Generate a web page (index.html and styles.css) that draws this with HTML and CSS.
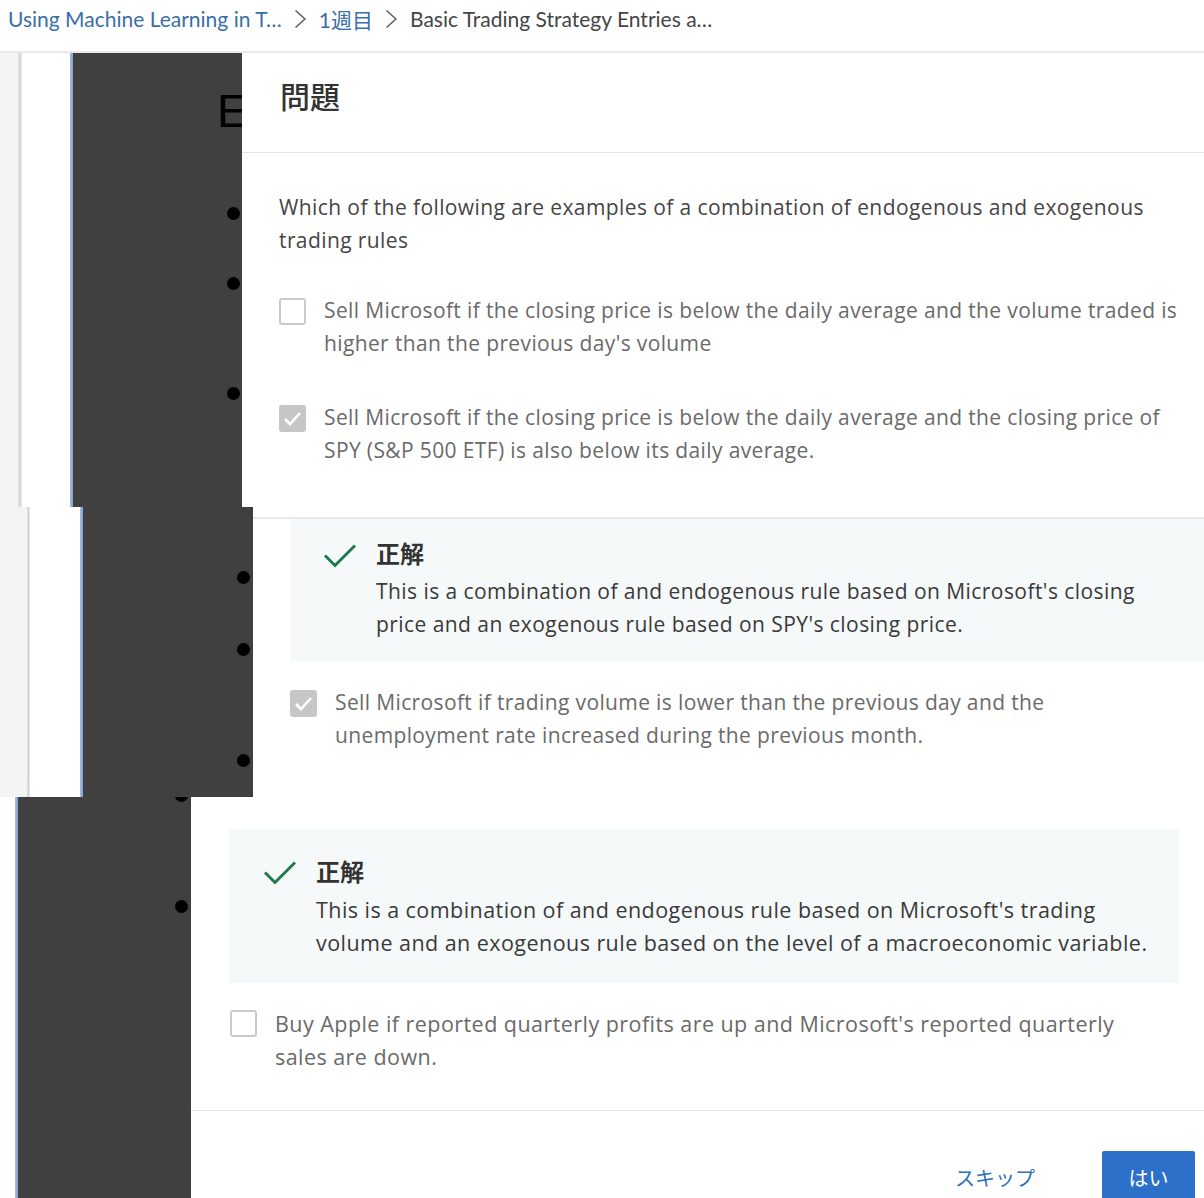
FILE: index.html
```html
<!DOCTYPE html>
<html lang="ja">
<head>
<meta charset="utf-8">
<title>問題</title>
<link rel="stylesheet" href="styles.css">
</head>
<body>
<nav class="crumbs">
  <a class="crumb link">Using Machine Learning in T…</a>
  <svg class="chev" width="13" height="20" viewBox="0 0 13 20"><polyline points="1.5,1.5 11,10 1.5,18.5" fill="none" stroke="#555" stroke-width="1.4"/></svg>
  <a class="crumb link">1週目</a>
  <svg class="chev" width="13" height="20" viewBox="0 0 13 20"><polyline points="1.5,1.5 11,10 1.5,18.5" fill="none" stroke="#555" stroke-width="1.4"/></svg>
  <span class="crumb current">Basic Trading Strategy Entries a…</span>
</nav>

<section class="band band1">
  <div class="g-gray g-gray1"></div>
  <div class="g-rule g-rule1"></div>
  <div class="g-white g-white1"></div>
  <div class="g-blue"></div>
  <div class="dark dark1">
    <span class="big-e">E</span>
    <i class="dot"></i><i class="dot"></i><i class="dot"></i>
  </div>
  <div class="modal">
    <header class="m-head">問題</header>
    <div class="m-body m-body1">
      <p class="question">Which of the following are examples of a combination of endogenous and exogenous<br>trading rules</p>
      <div class="opt opt-first">
        <span class="cb"></span>
        <span class="opt-text">Sell Microsoft if the closing price is below the daily average and the volume traded is<br>higher than the previous day's volume</span>
      </div>
      <div class="opt opt-second">
        <span class="cb cb-on"><svg width="27" height="27" viewBox="0 0 27 27"><polyline points="6,14 11,19 21,8" fill="none" stroke="#fff" stroke-width="2.6"/></svg></span>
        <span class="opt-text">Sell Microsoft if the closing price is below the daily average and the closing price of<br>SPY (S&amp;P 500 ETF) is also below its daily average.</span>
      </div>
    </div>
  </div>
</section>

<section class="band band2">
  <div class="g-gray g-gray2"></div>
  <div class="g-rule g-rule2"></div>
  <div class="g-white g-white2"></div>
  <div class="g-blue"></div>
  <div class="dark dark2">
    <i class="dot"></i><i class="dot"></i><i class="dot"></i>
  </div>
  <div class="modal">
    <div class="m-body m-body2">
      <div class="fb fb2">
        <svg class="fb-icon" width="34" height="25" viewBox="0 0 34 25"><polyline points="2,12.5 12,22.5 32,2.5" fill="none" stroke="#1f7a4d" stroke-width="3"/></svg>
        <div class="fb-main">
          <div class="fb-title">正解</div>
          <p class="fb-text">This is a combination of and endogenous rule based on Microsoft's closing<br>price and an exogenous rule based on SPY's closing price.</p>
        </div>
      </div>
      <div class="opt opt-after">
        <span class="cb cb-on"><svg width="27" height="27" viewBox="0 0 27 27"><polyline points="6,14 11,19 21,8" fill="none" stroke="#fff" stroke-width="2.6"/></svg></span>
        <span class="opt-text">Sell Microsoft if trading volume is lower than the previous day and the<br>unemployment rate increased during the previous month.</span>
      </div>
    </div>
  </div>
</section>

<section class="band band3">
  <div class="g-white g-white3"></div>
  <div class="g-blue"></div>
  <div class="dark dark3">
    <i class="dot"></i><i class="dot"></i>
  </div>
  <div class="modal">
    <div class="m-body m-body3">
      <div class="fb fb3">
        <svg class="fb-icon" width="34" height="25" viewBox="0 0 34 25"><polyline points="2,12.5 12,22.5 32,2.5" fill="none" stroke="#1f7a4d" stroke-width="3"/></svg>
        <div class="fb-main">
          <div class="fb-title">正解</div>
          <p class="fb-text">This is a combination of and endogenous rule based on Microsoft's trading<br>volume and an exogenous rule based on the level of a macroeconomic variable.</p>
        </div>
      </div>
      <div class="opt opt-after3">
        <span class="cb"></span>
        <span class="opt-text">Buy Apple if reported quarterly profits are up and Microsoft's reported quarterly<br>sales are down.</span>
      </div>
    </div>
    <footer class="m-foot">
      <button class="btn btn-skip">スキップ</button>
      <button class="btn btn-yes">はい</button>
    </footer>
  </div>
</section>
</body>
</html>
```

FILE: styles.css
```css
* { box-sizing: border-box; }

html, body {
  margin: 0;
  padding: 0;
  background: #fff;
}

body {
  width: 1204px;
  height: 1198px;
  overflow: hidden;
  font-family: "Open Sans", "Noto Sans CJK JP", sans-serif;
}

p { margin: 0; }

/* breadcrumb */
.crumbs {
  height: 53px;
  padding: 0 0 14px 8px;
  border-bottom: 2px solid #e9e9e9;
  display: flex;
  align-items: center;
  gap: 12px;
  font-family: "Lato", "Noto Sans CJK JP", sans-serif;
  font-size: 21px;
  white-space: nowrap;
}
.crumb { text-decoration: none; }
.link { color: #3a6ea8; }
.current { color: #454545; }
.chev { flex: none; }

/* bands */
.band {
  display: flex;
  overflow: hidden;
}
.band1 { height: 454px; }
.band2 { height: 290px; }
.band3 { height: 401px; }

.g-gray, .g-rule, .g-white, .g-blue { flex: none; }
.g-gray { background: #f4f4f4; }
.g-gray1 { width: 18px; }
.g-gray2 { width: 27px; }
.g-rule { background: linear-gradient(to right, #e4e4e4, #d3d3d3, #ececec); }
.g-rule1 { width: 4px; }
.g-rule2 { width: 3px; }
.g-white { background: #fff; }
.g-white1 { width: 48px; }
.g-white2 { width: 50px; }
.g-white3 { width: 15px; }
.g-blue {
  width: 3px;
  background: linear-gradient(to right, #a8bde0, #7f9fd1);
}

.dark {
  flex: none;
  background: #404040;
  overflow: hidden;
  display: flex;
  flex-direction: column;
  align-items: flex-start;
}
.dark1 { width: 169px; padding-left: 144px; }
.dark2 { width: 170px; padding-left: 154px; }
.dark3 { width: 173px; padding-left: 157px; }

.big-e {
  display: block;
  margin-top: 35px;
  font-family: "Liberation Sans", sans-serif;
  font-size: 46px;
  line-height: 46px;
  color: #000;
}
.dot {
  display: block;
  flex: none;
  width: 13px;
  height: 13px;
  border-radius: 50%;
  background: #000;
}
.dark1 .dot { margin-left: 10px; }
.dark1 .dot:nth-of-type(1) { margin-top: 72.5px; }
.dark1 .dot:nth-of-type(2) { margin-top: 57px; }
.dark1 .dot:nth-of-type(3) { margin-top: 97px; }
.dark2 .dot:nth-of-type(1) { margin-top: 63.5px; }
.dark2 .dot:nth-of-type(2) { margin-top: 59px; }
.dark2 .dot:nth-of-type(3) { margin-top: 98px; }
.dark3 .dot:nth-of-type(1) { margin-top: -8.5px; }
.dark3 .dot:nth-of-type(2) { margin-top: 98px; }

/* modal */
.modal {
  flex: 1;
  min-width: 0;
  overflow: hidden;
  background: #fff;
}
.m-head {
  height: 100px;
  padding: 0 0 16px 38px;
  border-bottom: 1px solid #e4e4e4;
  display: flex;
  align-items: center;
  font-family: "Noto Sans CJK JP", sans-serif;
  font-weight: 500;
  font-size: 30px;
  color: #333;
}
.m-body1 { padding: 38px 0 0 37px; }
.m-body2 {
  margin-top: 10px;
  border-top: 2px solid #e9e9e9;
  padding-left: 37px;
}
.m-body3 { padding: 32px 25px 37.5px 39px; }

.question {
  margin-bottom: 37px;
  font-size: 21px;
  letter-spacing: 0.4px;
  line-height: 33px;
  color: #454545;
  white-space: nowrap;
}

.opt {
  display: flex;
  align-items: flex-start;
  gap: 18px;
  font-size: 21px;
  letter-spacing: 0.37px;
  line-height: 33px;
  color: #6a6a6a;
  white-space: nowrap;
}
.opt-second { margin-top: 41px; }
.opt-after { margin-top: 25.5px; }
.opt-after3 {
  margin-top: 24px;
  font-size: 21.5px;
  letter-spacing: 0.45px;
}

.cb {
  flex: none;
  width: 27px;
  height: 27px;
  margin-top: 3.5px;
  border: 2px solid #cbcbcb;
  border-radius: 3px;
  background: #fff;
}
.cb-on {
  border: none;
  background: #c6c6c6;
}
.cb-on svg { display: block; }

/* feedback */
.fb {
  width: 950px;
  display: flex;
  align-items: flex-start;
  gap: 19px;
  background: #f5f9f9;
}
.m-body3 .fb { margin-left: -1px; }
.fb2 { padding: 16px 0 19.5px 33px; }
.fb3 { padding: 24px 0 23.5px 34px; }
.fb-icon { flex: none; }
.fb2 .fb-icon { margin-top: 8px; }
.fb3 .fb-icon { margin-top: 7px; }
.fb-title {
  font-family: "Noto Sans CJK JP", sans-serif;
  font-weight: 700;
  font-size: 24px;
  line-height: 36px;
  color: #333;
}
.fb-text {
  margin-top: 4px;
  font-size: 21px;
  letter-spacing: 0.44px;
  line-height: 33px;
  color: #3a3a3a;
  white-space: nowrap;
}
.fb3 .fb-text {
  font-size: 21.5px;
  letter-spacing: 0.45px;
}

/* footer */
.m-foot {
  border-top: 1px solid #e6e6e6;
  padding: 40px 9px 0 0;
  display: flex;
  justify-content: flex-end;
  align-items: flex-start;
}
.btn {
  height: 52px;
  border: none;
  font-family: "Noto Sans CJK JP", sans-serif;
  font-size: 20px;
  cursor: pointer;
}
.btn-skip {
  margin-right: 43px;
  padding: 0 24px;
  background: transparent;
  color: #2f6fba;
}
.btn-yes {
  width: 93px;
  padding: 0;
  border-radius: 2px;
  background: #2c70c9;
  color: #fff;
}
```
